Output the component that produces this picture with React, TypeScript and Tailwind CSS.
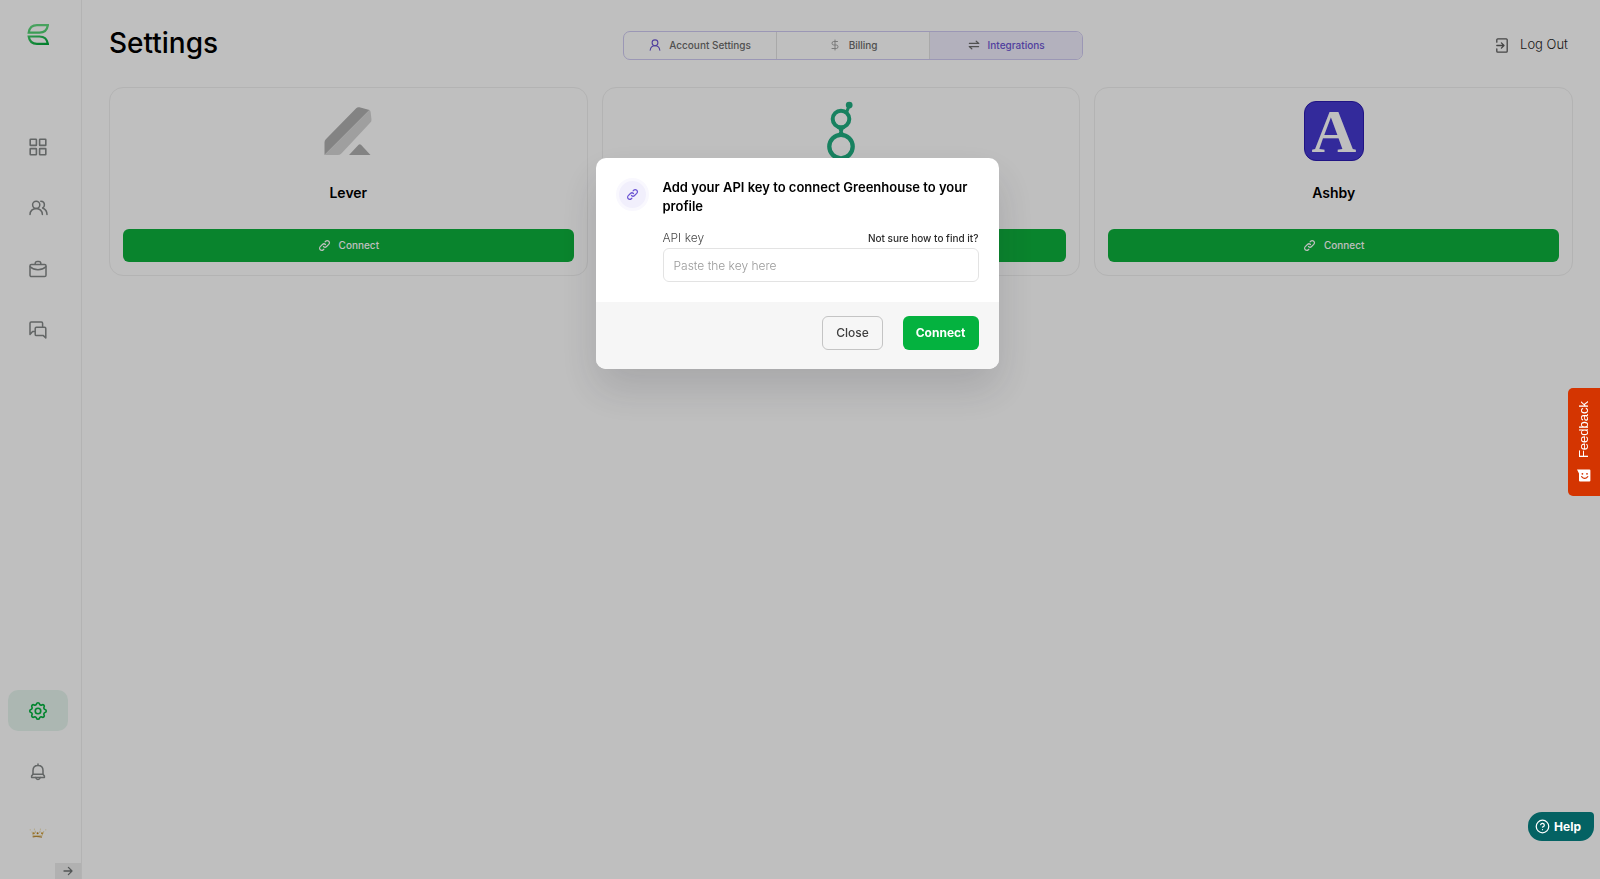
import type { ReactNode } from "react";
import { CircleHelp, DollarSign } from "lucide-react";
import { TbSettings } from "react-icons/tb";

const stroke = {
  fill: "none",
  stroke: "currentColor",
  strokeLinecap: "round" as const,
  strokeLinejoin: "round" as const,
};

function BrandLogo() {
  return (
    <svg width="22" height="22" viewBox="0 0 22 22" fill="none" strokeWidth="2.2">
      <defs>
        <linearGradient id="leafTop" x1="0" y1="0" x2="0" y2="1">
          <stop offset="0" stopColor="#62d87f" />
          <stop offset="1" stopColor="#4fd070" />
        </linearGradient>
        <linearGradient id="leafBottom" x1="0" y1="0" x2="1" y2="1">
          <stop offset="0" stopColor="#3cc964" />
          <stop offset="1" stopColor="#00a83a" />
        </linearGradient>
      </defs>
      <path d="M20.9 1.2H10C5.5 1.2 2.4 4 1.7 8.6H12.5C17.3 8.6 20.1 5.8 20.9 1.2Z" stroke="url(#leafTop)" />
      <path d="M1.7 12.5H12.5C17.3 12.5 20.1 15.3 20.9 19.9H10C5.5 19.9 2.4 17.1 1.7 12.5Z" stroke="url(#leafBottom)" />
    </svg>
  );
}

function GridIcon() {
  return (
    <svg width="18" height="18" viewBox="0 0 18 18" {...stroke} strokeWidth="1.6">
      <rect x="1.2" y="1.2" width="6.2" height="6.2" rx="0.5" />
      <rect x="10.6" y="1.2" width="6.2" height="6.2" rx="0.5" />
      <rect x="1.2" y="10.6" width="6.2" height="6.2" rx="0.5" />
      <rect x="10.6" y="10.6" width="6.2" height="6.2" rx="0.5" />
    </svg>
  );
}

function PeopleIcon() {
  return (
    <svg width="19" height="16" viewBox="0 0 19 16" {...stroke} strokeWidth="1.5">
      <circle cx="7.2" cy="4.8" r="3.6" />
      <path d="M1 14.6C1 11 3.7 8.4 7.2 8.4S13.4 11 13.4 14.6" />
      <path d="M11.8 1.2C14 1.3 15.4 2.9 15.4 4.9C15.4 6.3 14.7 7.4 13.6 8C16.4 9.2 18 11.5 18 14.6" />
    </svg>
  );
}

function BriefcaseIcon() {
  return (
    <svg width="18" height="18" viewBox="0 0 18 18" {...stroke} strokeWidth="1.5">
      <rect x="1" y="4.4" width="16" height="12.2" rx="1.4" />
      <path d="M6.2 4.2V3.4C6.2 2.2 7 1.4 8.1 1.4H9.9C11 1.4 11.8 2.2 11.8 3.4V4.2" />
      <path d="M1.2 6.8C3.4 8.9 6.2 9.8 9 9.8S14.6 8.9 16.8 6.8" />
    </svg>
  );
}

function ChatIcon() {
  return (
    <svg width="18" height="18" viewBox="0 0 18 18" {...stroke} strokeWidth="1.5">
      <path d="M5.4 10.6H3.6L1 13.4V2.2C1 1.5 1.5 1 2.2 1H12.4C13.1 1 13.6 1.5 13.6 2.2V5.6" />
      <path d="M7.4 6.2H15.6C16.3 6.2 16.8 6.7 16.8 7.4V17L14.4 14.6H7.4C6.7 14.6 6.2 14.1 6.2 13.4V7.4C6.2 6.7 6.7 6.2 7.4 6.2Z" />
    </svg>
  );
}

function BellIcon() {
  return (
    <svg width="18" height="18" viewBox="0 0 18 18" {...stroke} strokeWidth="1.5">
      <path d="M9 1V2.4M4 11.2V7.6C4 4.4 6 2.4 9 2.4S14 4.4 14 7.6V11.2" />
      <path d="M4 11.2H14L15.4 13V14.4H2.6V13Z" />
      <path d="M6.8 14.6C7.1 15.9 7.9 16.5 9 16.5S10.9 15.9 11.2 14.6" />
    </svg>
  );
}

function CrownIcon() {
  return (
    <svg width="18" height="10" viewBox="0 0 18 10" fill="none">
      <path d="M3 3.6L4.4 8.4M6 2.6L6.8 5M11.2 2.6L10.6 5M14.8 3.2L13 7.8" stroke="#e3cf9a" strokeWidth="0.9" />
      <path d="M3.6 9C6 7.8 10 8.4 13 9.2" stroke="#c2913a" strokeWidth="1.2" />
      <path d="M4 7.4H12.8" stroke="#ecd9a6" strokeWidth="1" />
      <circle cx="4.8" cy="5.2" r="1" fill="#d09a34" />
      <circle cx="8.6" cy="5.2" r="1" fill="#b97c16" />
      <circle cx="13" cy="5.2" r="1" fill="#d09a34" />
      <circle cx="1.2" cy="1.8" r="0.6" fill="#ecd9a6" />
      <circle cx="5.4" cy="1.2" r="0.6" fill="#ecd9a6" />
      <circle cx="11.4" cy="1.2" r="0.6" fill="#ecd9a6" />
      <circle cx="16.8" cy="1.8" r="0.6" fill="#ecd9a6" />
    </svg>
  );
}

function UserIcon() {
  return (
    <svg width="12" height="12" viewBox="0 0 12 12" {...stroke} strokeWidth="1.1">
      <circle cx="6" cy="3.8" r="2.9" />
      <path d="M1.2 11.2C1.5 8.6 3.4 6.8 6 6.8S10.5 8.6 10.8 11.2" />
    </svg>
  );
}

function SwapIcon() {
  return (
    <svg width="12" height="12" viewBox="0 0 12 12" {...stroke} strokeWidth="1.2">
      <path d="M1.4 4.4H10.8L8.2 2.2" />
      <path d="M10.6 7.6H1.2L3.8 9.8" />
    </svg>
  );
}

function LinkIcon() {
  return (
    <svg width="13" height="13" viewBox="0 0 24 24" {...stroke} strokeWidth="2.2">
      <path d="M13.828 10.172a4 4 0 00-5.656 0l-4 4a4 4 0 105.656 5.656l1.102-1.101m-.758-4.899a4 4 0 005.656 0l4-4a4 4 0 00-5.656-5.656l-1.1 1.1" />
    </svg>
  );
}

function LogOutIcon() {
  return (
    <svg width="12" height="15" viewBox="0 0 12 15" {...stroke} strokeWidth="1.3">
      <path d="M.8 4.2V1.8C.8 1.2 1.2.8 1.8.8H10.2C10.8.8 11.2 1.2 11.2 1.8V13.2C11.2 13.8 10.8 14.2 10.2 14.2H1.8C1.2 14.2.8 13.8.8 13.2V10.8" />
      <path d="M.8 7.5H7.8M5.4 4.9L8 7.5L5.4 10.1" />
    </svg>
  );
}

function ArrowRightIcon() {
  return (
    <svg width="10" height="10" viewBox="0 0 10 10" {...stroke} strokeWidth="1.3">
      <path d="M1 5H9M5.4 1.4L9 5L5.4 8.6" />
    </svg>
  );
}

function LeverLogo() {
  return (
    <svg width="60" height="60" viewBox="0 0 60 60">
      <path d="M6.5 54V41.5Q6.5 39.6 7.8 38.2L38.2 7.2Q39.6 5.8 41.4 6.3L51.5 9Z" fill="#afafaf" />
      <path d="M6.5 54L51.5 9Q52.4 9.6 52.6 10.8L53.5 18.4Q53.7 20.2 52.4 21.6L23.4 52.4Q21.9 54 19.8 54Z" fill="#d5d5d5" />
      <path d="M31 54L40.6 43.8Q41.8 42.6 43 43.8L52.5 54Z" fill="#afafaf" />
    </svg>
  );
}

function GreenhouseLogo() {
  return (
    <svg width="60" height="60" viewBox="0 0 60 60" fill="none" stroke="#20ad80">
      <circle cx="30" cy="18" r="8.3" strokeWidth="4" />
      <circle cx="30" cy="45.6" r="11.7" strokeWidth="4.3" />
      <path d="M25.5 26.5Q28.4 28.4 28.4 30.4Q28.4 32 25 34H35Q31.8 32 31.8 30.4Q31.8 28.4 34.5 26.5Z" fill="#20ad80" stroke="none" />
      <path d="M35.4 11.6L37.8 5.6" strokeWidth="3" />
      <circle cx="38.2" cy="4.1" r="3.4" fill="#20ad80" stroke="none" />
    </svg>
  );
}

function AshbyLogo() {
  return (
    <svg width="60" height="60" viewBox="0 0 60 60" className="overflow-visible">
      <rect x="0.5" y="0.5" width="59" height="59" rx="11.5" fill="#4438cf" stroke="#2b1bb0" />
      <text
        x="30"
        y="51"
        textAnchor="middle"
        fill="#fff"
        className="font-['Liberation_Serif',serif] text-[62px] font-bold"
      >
        A
      </text>
    </svg>
  );
}

function SmileIcon() {
  return (
    <svg width="14" height="14" viewBox="0 0 14 14">
      <path d="M0 .6H12.4Q13.4 .6 13.4 1.6V11.6Q13.4 12.6 12.4 12.6H3Q2 12.6 2 11.6V4.4Z" fill="#fff" />
      <circle cx="5.4" cy="4.8" r="0.9" fill="#d43501" />
      <circle cx="10" cy="4.8" r="0.9" fill="#d43501" />
      <path d="M4.6 7.6Q7.7 11 10.8 7.6" fill="none" stroke="#d43501" strokeWidth="1.2" strokeLinecap="round" />
    </svg>
  );
}

function NavItem({ label, active, children }: { label: string; active?: boolean; children: ReactNode }) {
  return (
    <a
      href="#"
      aria-label={label}
      className={
        active
          ? "flex h-[41px] items-center justify-center rounded-[10px] bg-[#e6f5ee] text-[#04b23f]"
          : "flex h-[41px] items-center justify-center rounded-[10px] text-[#848888]"
      }
    >
      {children}
    </a>
  );
}

function Sidebar() {
  return (
    <aside className="flex w-[82px] shrink-0 flex-col border-r border-[#efefef]">
      <div className="flex flex-1 flex-col justify-between pt-6 pb-[10px] pl-2 pr-[13px]">
        <div>
          <a href="#" aria-label="Home" className="flex justify-center">
            <BrandLogo />
          </a>
          <nav className="mt-20 flex flex-col gap-5">
            <NavItem label="Dashboard"><GridIcon /></NavItem>
            <NavItem label="Candidates"><PeopleIcon /></NavItem>
            <NavItem label="Jobs"><BriefcaseIcon /></NavItem>
            <NavItem label="Messages"><ChatIcon /></NavItem>
          </nav>
        </div>
        <nav className="flex flex-col gap-5">
          <NavItem label="Settings" active><TbSettings size={22} strokeWidth={1.8} /></NavItem>
          <NavItem label="Notifications"><BellIcon /></NavItem>
          <NavItem label="Profile"><CrownIcon /></NavItem>
        </nav>
      </div>
      <button
        aria-label="Expand sidebar"
        className="flex h-4 w-[26px] items-center justify-center self-end bg-[#ededed] text-[#6f7373]"
      >
        <ArrowRightIcon />
      </button>
    </aside>
  );
}

function Tabs() {
  return (
    <div className="flex h-[29px] w-[460px] divide-x divide-[#e2e2e2] overflow-hidden rounded-[7px] border border-[#cfcaf2] text-[10px] font-medium text-[#6b6b6b]">
      <button className="flex flex-1 items-center justify-center gap-2">
        <span className="text-[#6b54d3]"><UserIcon /></span>
        Account Settings
      </button>
      <button className="flex flex-1 items-center justify-center gap-2">
        <DollarSign size={12} strokeWidth={2} className="text-[#a3a3a3]" />
        Billing
      </button>
      <button className="flex flex-1 items-center justify-center gap-2 bg-[#efecfd] text-[#6b54d3]">
        <span className="text-[#6b6b6b]"><SwapIcon /></span>
        Integrations
      </button>
    </div>
  );
}

const integrations = [
  { name: "Lever", logo: <LeverLogo /> },
  { name: "Greenhouse", logo: <GreenhouseLogo /> },
  { name: "Ashby", logo: <AshbyLogo /> },
];

function IntegrationCard({ name, logo }: { name: string; logo: ReactNode }) {
  return (
    <div className="flex flex-col items-center rounded-[14px] border border-[#efefef] p-[13px]">
      {logo}
      <h2 className="mt-5 text-[14px] leading-6 font-semibold">{name}</h2>
      <button className="mt-6 flex h-[33px] w-full items-center justify-center gap-2 rounded-md bg-[#0db03c] text-[10px] font-medium text-white">
        <LinkIcon />
        Connect
      </button>
    </div>
  );
}

function ApiKeyDialog() {
  return (
    <div className="fixed inset-0 flex items-start justify-center bg-black/25 pt-[158px] pr-[6px]">
      <div
        role="dialog"
        aria-labelledby="dialog-title"
        className="w-[403px] overflow-hidden rounded-[10px] bg-white shadow-[0_20px_40px_rgba(24,24,40,0.15)]"
      >
        <div className="flex gap-[14px] px-5 pt-5 pb-5">
          <div className="flex size-[33px] shrink-0 items-center justify-center rounded-full border-3 border-[#f9f8fe] bg-[#f1effc] text-[#6b54d3]">
            <LinkIcon />
          </div>
          <div className="flex-1">
            <h3 id="dialog-title" className="text-[13px] leading-[19px] font-semibold">
              Add your API key to connect Greenhouse to your profile
            </h3>
            <div className="mt-3 flex h-5 items-center justify-between">
              <label htmlFor="api-key" className="text-[12px] font-light text-[#4a4a4a]">API key</label>
              <a href="#" className="text-[10px] font-medium text-[#2b2b2b]">Not sure how to find it?</a>
            </div>
            <input
              id="api-key"
              type="text"
              placeholder="Paste the key here"
              className="block h-[34px] w-full rounded-md border border-[#e3e3e3] px-[10px] text-[12px] font-light placeholder:text-[#9a9a9a]"
            />
          </div>
        </div>
        <div className="flex justify-end gap-5 bg-[#f6f6f6] px-5 pt-[14px] pb-[19px]">
          <button className="h-[34px] rounded-md border border-[#c4c4c4] px-[13px] text-[12px] font-medium text-[#3f3f3f]">
            Close
          </button>
          <button className="h-[34px] rounded-md bg-[#04b23f] px-[13px] text-[12px] font-bold text-white">
            Connect
          </button>
        </div>
      </div>
    </div>
  );
}

export default function App() {
  return (
    <div className="flex min-h-screen bg-white font-[Inter,sans-serif] text-black">
      <Sidebar />
      <main className="flex-1 px-[27px]">
        <header className="flex h-[87px] items-center justify-between pt-[3px]">
          <h1 className="pb-1 text-[28px] leading-10 font-medium">Settings</h1>
          <Tabs />
          <button className="flex items-center gap-3 pr-[5px] pl-2 text-[13px] font-light text-[#1e1e1e]">
            <span className="text-[#5c5c5c]"><LogOutIcon /></span>
            Log Out
          </button>
        </header>
        <section className="grid grid-cols-3 gap-[14px]">
          {integrations.map(i => (
            <IntegrationCard key={i.name} name={i.name} logo={i.logo} />
          ))}
        </section>
      </main>

      <ApiKeyDialog />

      {/* floating widgets */}
      <button className="fixed top-[388px] right-0 flex h-[108px] w-8 flex-col items-center justify-center gap-[10px] rounded-l-[5px] bg-[#d43501] font-['Liberation_Sans',sans-serif] text-[13px] text-white">
        <span className="rotate-180 [writing-mode:vertical-rl]">Feedback</span>
        <SmileIcon />
      </button>
      <button className="fixed right-[6px] bottom-[38px] flex h-[29px] items-center gap-1 rounded-[14px] rounded-tr-[4px] bg-[#046263] pr-[13px] pl-[7px] text-[12px] font-bold text-white">
        <CircleHelp size={15} strokeWidth={2} />
        Help
      </button>
    </div>
  );
}
